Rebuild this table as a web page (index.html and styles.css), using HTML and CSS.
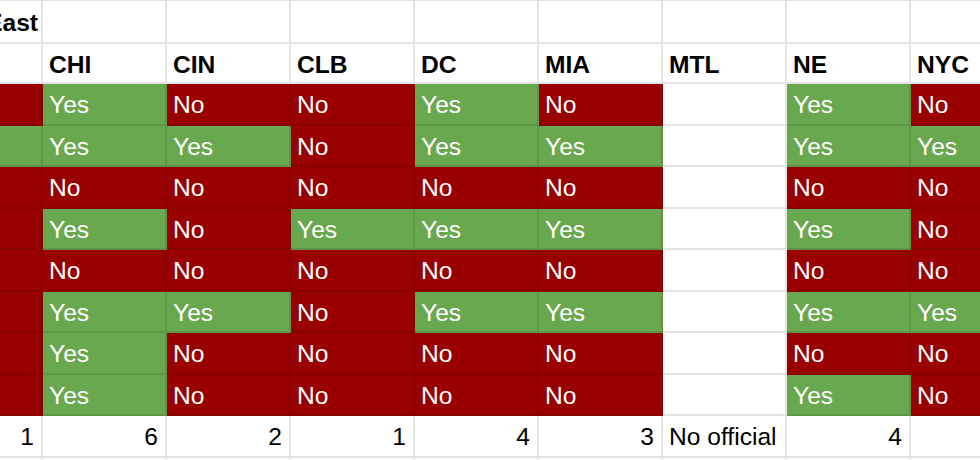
FILE: index.html
```html
<!DOCTYPE html>
<html>
<head>
<meta charset="utf-8">
<link rel="stylesheet" href="styles.css">
</head>
<body>
<div class="viewport">
  <div class="sheet">
    <div class="cell hdr first">East</div><div class="cell"></div><div class="cell"></div><div class="cell"></div><div class="cell"></div><div class="cell"></div><div class="cell"></div><div class="cell"></div><div class="cell"></div>

    <div class="cell"></div><div class="cell hdr">CHI</div><div class="cell hdr">CIN</div><div class="cell hdr">CLB</div><div class="cell hdr">DC</div><div class="cell hdr">MIA</div><div class="cell hdr">MTL</div><div class="cell hdr">NE</div><div class="cell hdr">NYC</div>

    <div class="cell no"></div><div class="cell yes">Yes</div><div class="cell no">No</div><div class="cell no">No</div><div class="cell yes">Yes</div><div class="cell no">No</div><div class="cell"></div><div class="cell yes">Yes</div><div class="cell no">No</div>

    <div class="cell yes"></div><div class="cell yes">Yes</div><div class="cell yes">Yes</div><div class="cell no">No</div><div class="cell yes">Yes</div><div class="cell yes">Yes</div><div class="cell"></div><div class="cell yes">Yes</div><div class="cell yes">Yes</div>

    <div class="cell no"></div><div class="cell no">No</div><div class="cell no">No</div><div class="cell no">No</div><div class="cell no">No</div><div class="cell no">No</div><div class="cell"></div><div class="cell no">No</div><div class="cell no">No</div>

    <div class="cell no"></div><div class="cell yes">Yes</div><div class="cell no">No</div><div class="cell yes">Yes</div><div class="cell yes">Yes</div><div class="cell yes">Yes</div><div class="cell"></div><div class="cell yes">Yes</div><div class="cell no">No</div>

    <div class="cell no"></div><div class="cell no">No</div><div class="cell no">No</div><div class="cell no">No</div><div class="cell no">No</div><div class="cell no">No</div><div class="cell"></div><div class="cell no">No</div><div class="cell no">No</div>

    <div class="cell no"></div><div class="cell yes">Yes</div><div class="cell yes">Yes</div><div class="cell no">No</div><div class="cell yes">Yes</div><div class="cell yes">Yes</div><div class="cell"></div><div class="cell yes">Yes</div><div class="cell yes">Yes</div>

    <div class="cell no"></div><div class="cell yes">Yes</div><div class="cell no">No</div><div class="cell no">No</div><div class="cell no">No</div><div class="cell no">No</div><div class="cell"></div><div class="cell no">No</div><div class="cell no">No</div>

    <div class="cell no"></div><div class="cell yes">Yes</div><div class="cell no">No</div><div class="cell no">No</div><div class="cell no">No</div><div class="cell no">No</div><div class="cell"></div><div class="cell yes">Yes</div><div class="cell no">No</div>

    <div class="cell num">1</div><div class="cell num">6</div><div class="cell num">2</div><div class="cell num">1</div><div class="cell num">4</div><div class="cell num">3</div><div class="cell">No official</div><div class="cell num">4</div><div class="cell"></div>

    <div class="cell"></div><div class="cell"></div><div class="cell"></div><div class="cell"></div><div class="cell"></div><div class="cell"></div><div class="cell"></div><div class="cell"></div><div class="cell"></div>
  </div>
</div>
</body>
</html>
```

FILE: styles.css
```css
html, body {
  margin: 0;
  padding: 0;
  background: #ffffff;
}

.viewport {
  width: 980px;
  height: 460px;
  overflow: hidden;
}

.sheet {
  display: grid;
  grid-template-columns: 43px repeat(8, 124px);
  grid-template-rows: 43px 40px repeat(10, 41.5px);
  border-top: 1px solid #e2e2e2;
  font-family: "Liberation Sans", Arial, sans-serif;
  font-size: 24.6px;
  color: #000000;
}

.cell {
  box-sizing: border-box;
  border-right: 2px solid rgba(0, 0, 0, 0.11);
  border-bottom: 2px solid rgba(0, 0, 0, 0.11);
  display: flex;
  align-items: center;
  padding: 4px 7px 0 6px;
  white-space: nowrap;
  overflow: hidden;
  line-height: 1;
}

.hdr {
  font-weight: bold;
}

.first {
  justify-content: flex-end;
  padding-right: 3px;
}

.num {
  justify-content: flex-end;
}

.yes {
  background: #6aa84f;
  color: #ffffff;
}

.no {
  background: #990000;
  color: #ffffff;
}
```
